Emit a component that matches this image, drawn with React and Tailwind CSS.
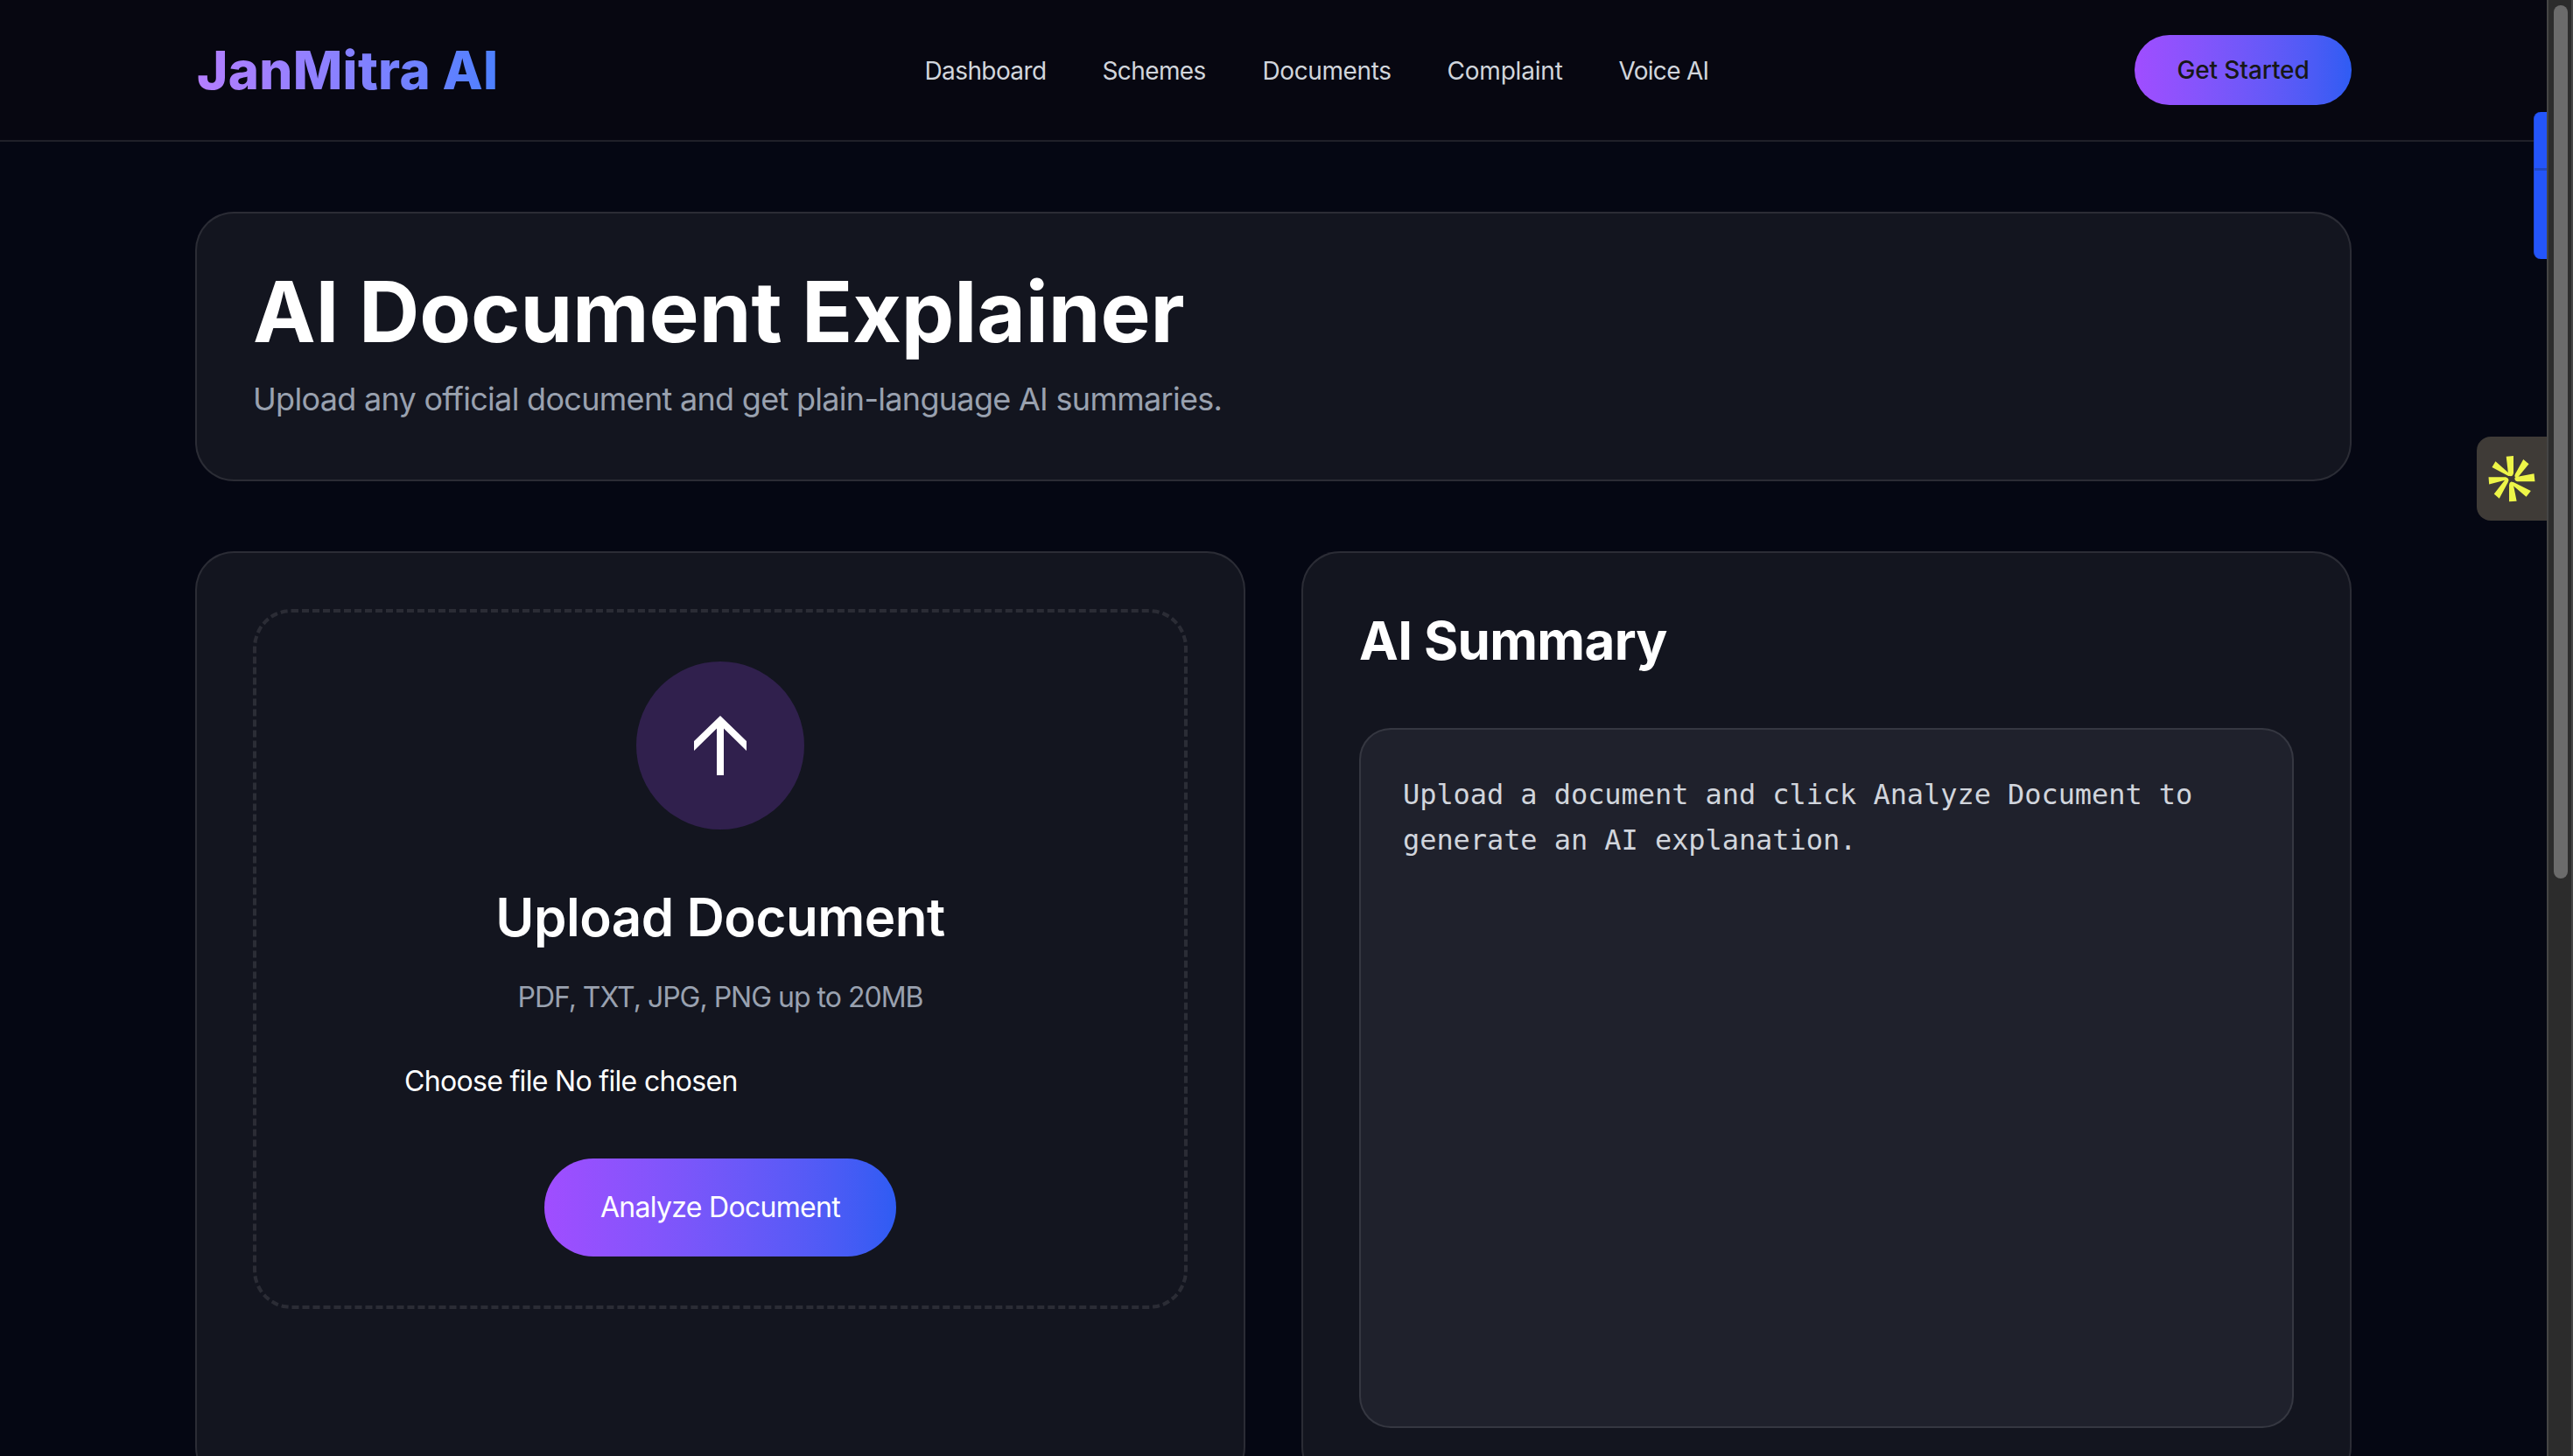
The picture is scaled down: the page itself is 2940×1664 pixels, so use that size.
import clsx from "clsx";

const navLinks = [
  { label: "Dashboard", size: "w-[139px] tracking-[-0.6px]" },
  { label: "Schemes", size: "w-[119px] tracking-[-0.6px]" },
  { label: "Documents", size: "w-[147px] tracking-[-0.4px]" },
  { label: "Complaint", size: "w-[132px] tracking-[-0.2px]" },
  { label: "Voice AI", size: "w-[104px] tracking-[-0.7px]" },
];

const card = "rounded-[44px] border-2 border-white/10 bg-[#13151f] p-16";
const gradient = "bg-gradient-to-r from-[#a04dff] to-[#2e5cf3]";

function Navbar() {
  return (
    <header className="border-b-2 border-white/10 bg-[#070711]">
      <div className="mx-auto flex w-[2464px] items-center justify-between py-10">
        <div className="w-[348px] bg-gradient-to-r from-[#b47eff] to-[#4b80ff] bg-clip-text pl-0.5 text-[60px] leading-[72px] font-extrabold tracking-[0.3px] whitespace-nowrap text-transparent">
          JanMitra AI
        </div>
        <nav className="flex gap-16 pt-0.5 text-[28px] leading-10 text-gray-300">
          {navLinks.map((link) => (
            <a key={link.label} href="#" className={clsx("whitespace-nowrap", link.size)}>
              {link.label}
            </a>
          ))}
        </nav>
        <button className={clsx("h-20 w-[248px] rounded-full text-[28px] font-medium tracking-[-0.1px] text-[#171717]", gradient)}>
          Get Started
        </button>
      </div>
    </header>
  );
}

function UploadPanel() {
  return (
    <div className={card}>
      <div className="flex h-[800px] flex-col items-center justify-center rounded-[44px] border-4 border-dashed border-white/10">
        <div className="flex size-48 items-center justify-center rounded-full bg-[#30204d]">
          <svg viewBox="0 0 60 68" className="h-[68px] w-[60px]" fill="white">
            <path d="M30 0L60 29V40L34 14.500V68H26V14.500L0 40V29Z" />
          </svg>
        </div>
        <h2 className="mt-16 text-[60px] leading-[72px] font-semibold tracking-[-0.45px]">Upload Document</h2>
        <p className="mt-8 text-[32px] leading-[48px] tracking-[-1px] text-gray-400">
          PDF, TXT, JPG, PNG up to 20MB
        </p>
        <div className="mt-12 w-[722px] text-[32px] leading-[48px] tracking-[-0.68px]">Choose file No file chosen</div>
        <button className={clsx("mt-16 h-28 w-[402px] rounded-full text-[32px] tracking-[-0.7px]", gradient)}>
          Analyze Document
        </button>
      </div>
    </div>
  );
}

function SummaryPanel() {
  return (
    <div className={card}>
      <h2 className="text-[60px] leading-[72px] font-bold tracking-[-0.65px]">AI Summary</h2>
      <div className="mt-16 h-[800px] rounded-[36px] border-2 border-white/10 bg-[#1f212c] p-12">
        <pre className="font-['DejaVu_Sans_Mono',monospace] text-[32px] leading-[52px] tracking-[-0.07px] whitespace-pre-wrap text-gray-300">
          Upload a document and click Analyze Document to generate an AI explanation.
        </pre>
      </div>
    </div>
  );
}

// Extension widgets docked to the right edge of the page
function EdgeTabs() {
  return (
    <>
      <div className="absolute top-32 right-0 h-[168px] w-[15px] rounded-l-lg border-l border-[#2148d0] bg-[#2455fa]">
        <div className="mt-16 h-[3px] bg-[#2148c4]" />
      </div>
      <div className="absolute top-[499px] right-0 flex h-24 w-20 items-center rounded-l-2xl bg-[#3f3b37] pl-[13px]">
        <svg viewBox="130 121 162 160" className="h-[53px] w-[54px]" fill="#edf548">
          <path d="M192 123L217 121V180Q216 191 207 191Q200 191 199 184Z" />
          <path d="M155 140L143 160L198 190Q205 192 208 187Z" />
          <path d="M251 133L270 149L233 194Q227 199 222 194Q220 190 223 184Z" />
          <path d="M288 182L291 209H230Q221 207 221 198Q223 193 232 193Z" />
          <path d="M131 194H190Q201 197 200 207Q196 209 188 205L133 219Z" />
          <path d="M150 252L168 268L198 212Q202 202 196 199Q191 198 187 205Z" />
          <path d="M202 279L228 277L217 222Q217 212 209 210Q202 213 202 222Z" />
          <path d="M261 262L277 242L218 212Q210 209 207 213Q207 217 213 221Z" />
        </svg>
      </div>
    </>
  );
}

function Scrollbar() {
  return (
    <div className="h-full w-[30px] border-x-2 border-[#454545] bg-[#2c2c2c] pt-1.5 pl-1.5">
      <div className="h-[998px] w-4 rounded-full bg-[#6b6b6b]" />
    </div>
  );
}

export default function App() {
  return (
    <div className="flex h-[1664px] w-[2940px] overflow-hidden bg-[#050713] font-['Inter',sans-serif] text-white">
      <div className="relative h-full w-[2910px] overflow-hidden">
        <Navbar />
        <main className="mx-auto w-[2464px] pt-20">
          <section className={card}>
            <h1 className="text-[96px] leading-none font-bold tracking-[-0.1px]">AI Document Explainer</h1>
            <p className="mt-6 text-[36px] leading-[56px] tracking-[-0.7px] text-gray-400">
              Upload any official document and get plain-language AI summaries.
            </p>
          </section>
          <div className="mt-20 grid grid-cols-2 gap-16">
            <UploadPanel />
            <SummaryPanel />
          </div>
        </main>
        <EdgeTabs />
      </div>
      <Scrollbar />
    </div>
  );
}
